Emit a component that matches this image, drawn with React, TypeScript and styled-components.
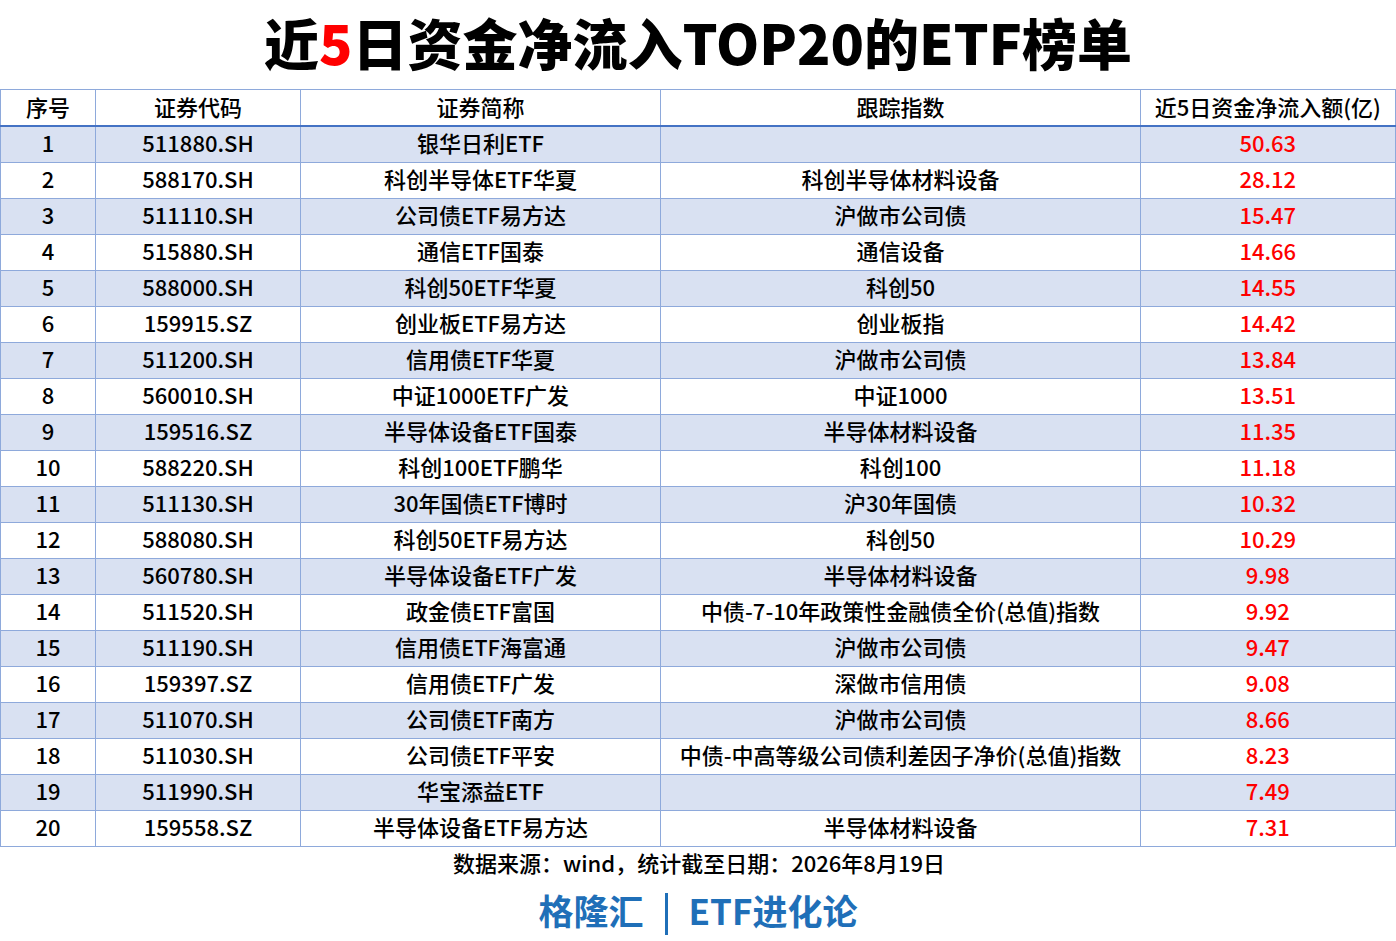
import React from "react";
import styled, { createGlobalStyle } from "styled-components";

const Global = createGlobalStyle`
  html, body { margin: 0; padding: 0; background: #ffffff; }
  body { font-family: "Noto Sans CJK SC", "Noto Sans", sans-serif; color: #000; }
`;

const Page = styled.div`
  width: 1396px;
  height: 941px;
  display: flex;
  flex-direction: column;
  align-items: center;
  background: #fff;
  overflow: hidden;
  & > * { flex-shrink: 0; }
`;

const Title = styled.h1`
  margin: 0;
  height: 89px;
  display: flex;
  align-items: center;
  justify-content: center;
  font-size: 55px;
  font-weight: 900;
  letter-spacing: 0;
  line-height: 1;
  padding-bottom: 7px;
  box-sizing: border-box;
`;

const Red = styled.span`
  color: #ff0000;
`;

const Table = styled.table`
  border-collapse: collapse;
  table-layout: fixed;
  width: 1395px;
  align-self: flex-start;
  border-top: 1px solid #8ea9db;
  border-right: 2px solid #8ea9db;
  border-bottom: 1px solid #8ea9db;
`;

const Th = styled.th`
  height: 31px;
  padding: 0 0 4px;
  font-size: 22px;
  font-weight: 500;
  text-align: center;
  border-left: 1px solid #8ea9db;
  border-bottom: 2px solid #4472c4;
  line-height: 1;
  white-space: nowrap;
`;

const Row = styled.tr<{ $odd: boolean }>`
  background: ${(p) => (p.$odd ? "#d9e1f2" : "#ffffff")};
`;

const Td = styled.td<{ $red?: boolean }>`
  height: 30px;
  padding: 0 0 5px;
  font-size: 22px;
  font-weight: 500;
  text-align: center;
  line-height: 1;
  color: ${(p) => (p.$red ? "#ff0000" : "#000")};
  border-left: 1px solid #8ea9db;
  border-bottom: 1px solid #8ea9db;
  white-space: nowrap;
`;

const Source = styled.div`
  margin-top: 0;
  font-size: 22px;
  font-weight: 500;
  height: 30px;
  line-height: 30px;
  padding-left: 2px;
`;

const Brand = styled.div`
  margin-top: 6px;
  display: flex;
  align-items: center;
  gap: 21px;
  font-size: 35px;
  font-weight: 700;
  color: #1f6fb8;
  line-height: 1;
`;

const Bar = styled.span`
  display: inline-block;
  width: 3px;
  height: 42px;
  background: #1f6fb8;
  margin-top: 10px;
`;

const rows: [string, string, string, string][] = [
  ["511880.SH", "银华日利ETF", "", "50.63"],
  ["588170.SH", "科创半导体ETF华夏", "科创半导体材料设备", "28.12"],
  ["511110.SH", "公司债ETF易方达", "沪做市公司债", "15.47"],
  ["515880.SH", "通信ETF国泰", "通信设备", "14.66"],
  ["588000.SH", "科创50ETF华夏", "科创50", "14.55"],
  ["159915.SZ", "创业板ETF易方达", "创业板指", "14.42"],
  ["511200.SH", "信用债ETF华夏", "沪做市公司债", "13.84"],
  ["560010.SH", "中证1000ETF广发", "中证1000", "13.51"],
  ["159516.SZ", "半导体设备ETF国泰", "半导体材料设备", "11.35"],
  ["588220.SH", "科创100ETF鹏华", "科创100", "11.18"],
  ["511130.SH", "30年国债ETF博时", "沪30年国债", "10.32"],
  ["588080.SH", "科创50ETF易方达", "科创50", "10.29"],
  ["560780.SH", "半导体设备ETF广发", "半导体材料设备", "9.98"],
  ["511520.SH", "政金债ETF富国", "中债-7-10年政策性金融债全价(总值)指数", "9.92"],
  ["511190.SH", "信用债ETF海富通", "沪做市公司债", "9.47"],
  ["159397.SZ", "信用债ETF广发", "深做市信用债", "9.08"],
  ["511070.SH", "公司债ETF南方", "沪做市公司债", "8.66"],
  ["511030.SH", "公司债ETF平安", "中债-中高等级公司债利差因子净价(总值)指数", "8.23"],
  ["511990.SH", "华宝添益ETF", "", "7.49"],
  ["159558.SZ", "半导体设备ETF易方达", "半导体材料设备", "7.31"],
];

const widths = [95, 205, 360, 480, 255];

export default function App() {
  return (
    <Page>
      <Global />
      <Title>
        近<Red>5</Red>日资金净流入TOP20的ETF榜单
      </Title>
      <Table>
        <colgroup>
          {widths.map((w, i) => (
            <col key={i} style={{ width: w }} />
          ))}
        </colgroup>
        <thead>
          <tr>
            <Th>序号</Th>
            <Th>证券代码</Th>
            <Th>证券简称</Th>
            <Th>跟踪指数</Th>
            <Th>近5日资金净流入额(亿)</Th>
          </tr>
        </thead>
        <tbody>
          {rows.map((r, i) => (
            <Row key={i} $odd={i % 2 === 0}>
              <Td>{i + 1}</Td>
              <Td>{r[0]}</Td>
              <Td>{r[1]}</Td>
              <Td>{r[2]}</Td>
              <Td $red>{r[3]}</Td>
            </Row>
          ))}
        </tbody>
      </Table>
      <Source>数据来源：wind，统计截至日期：2026年8月19日</Source>
      <Brand>
        <span>格隆汇</span>
        <Bar />
        <span>ETF进化论</span>
      </Brand>
    </Page>
  );
}
